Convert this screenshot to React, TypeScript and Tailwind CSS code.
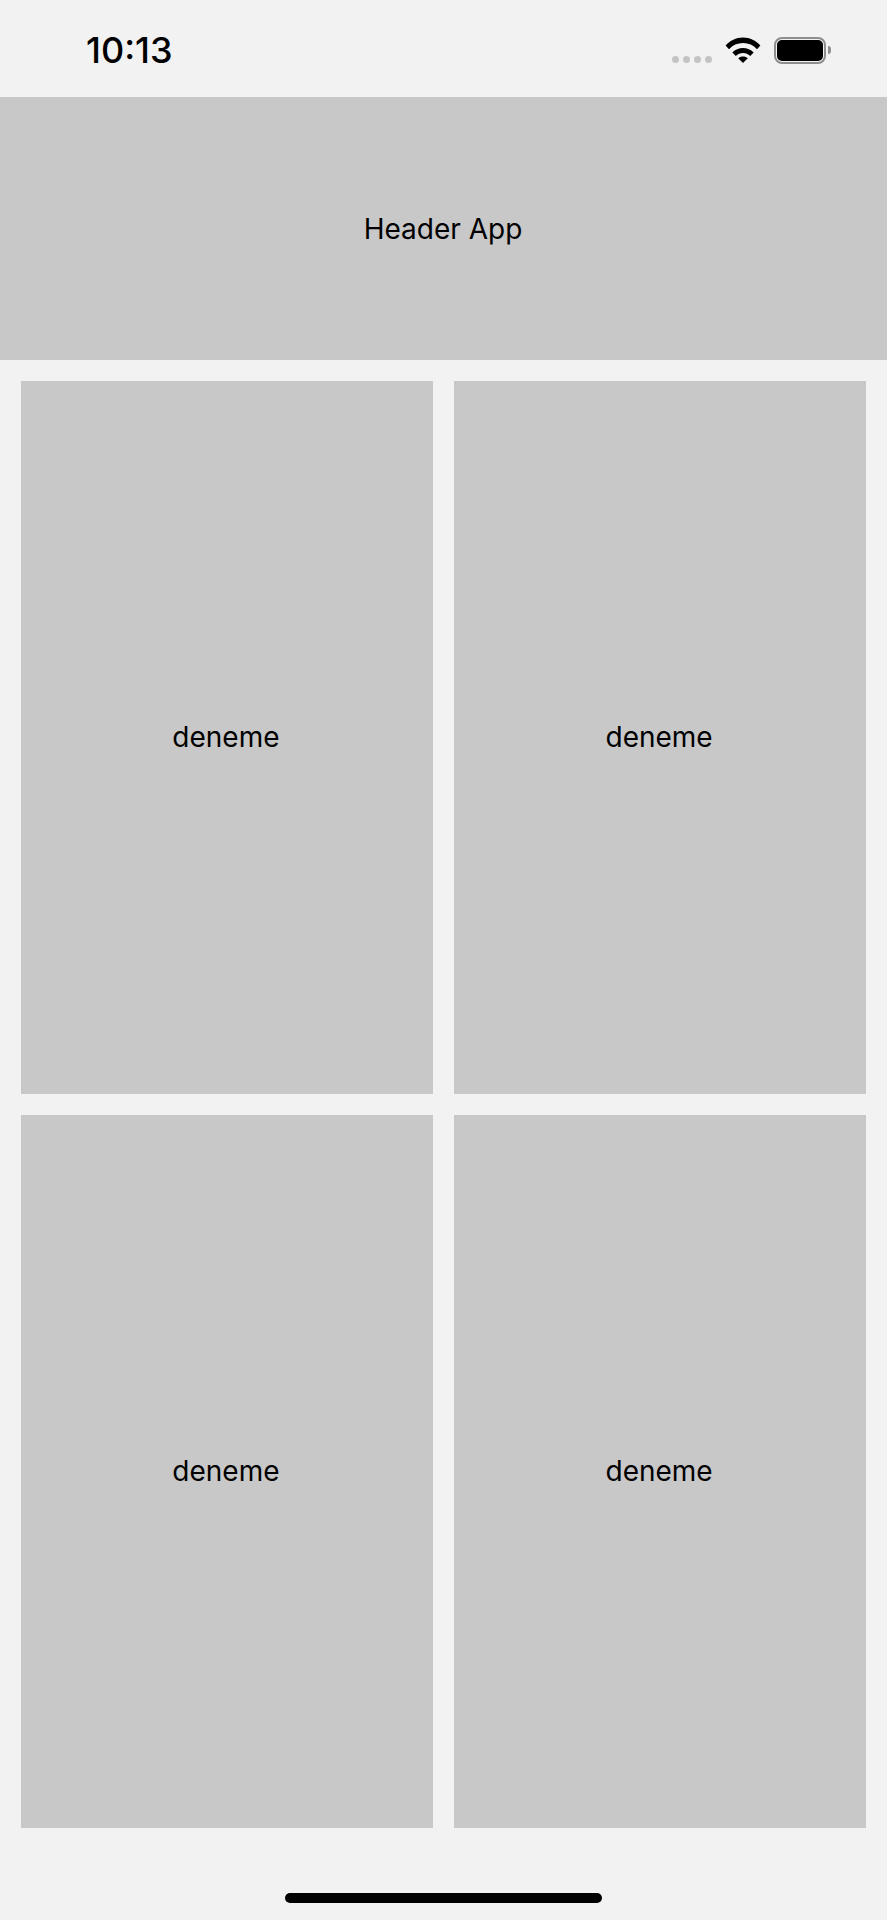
const cards = ["deneme", "deneme", "deneme", "deneme"];

function StatusIcons() {
  return (
    <div className="flex items-center">
      <div className="mt-[19px] mr-[13px] flex gap-[4px]">
        {[0, 1, 2, 3].map((i) => (
          <span key={i} className="h-[7px] w-[7px] rounded-full bg-[#c4c4c4]" />
        ))}
      </div>
      <svg width="36" height="26" viewBox="0 0 36 26" className="mr-[13px]">
        <path d="M0.6 8.6 C5 3.8 11 0.6 18 0.6 C25 0.6 31 3.8 35.4 8.6 L32 12.2 C28.4 8.2 23.6 6 18 6 C12.4 6 7.6 8.2 4 12.2 Z" fill="#000" />
        <path d="M7.3 15.4 C10.2 12.4 13.8 10.9 18 10.9 C22.2 10.9 25.8 12.4 28.7 15.4 L25.2 19 C23.2 17 20.8 15.9 18 15.9 C15.2 15.9 12.8 17 10.8 19 Z" fill="#000" />
        <path d="M13.2 21.2 C14.5 20.2 16.2 19.6 18 19.6 C19.8 19.6 21.5 20.2 22.8 21.2 L18 26 Z" fill="#000" />
      </svg>
      <div className="flex items-center">
        <div className="flex h-[27px] w-[52px] items-center justify-center rounded-[8px] border-[2px] border-[#8e8e8e] p-[1px]">
          <div className="h-full w-full rounded-[5px] bg-black" />
        </div>
        <div className="ml-[2px] h-[8px] w-[3px] rounded-r-full bg-[#8e8e8e]" />
      </div>
    </div>
  );
}

export default function App() {
  return (
    <div className="flex h-[1920px] w-[887px] flex-col bg-[#f2f2f2] font-['Inter',sans-serif] text-black">
      <div className="flex h-[97px] shrink-0 items-center justify-between pl-[86px] pr-[56px] pt-[3px]">
        <span className="text-[36px] font-[550] leading-none">10:13</span>
        <StatusIcons />
      </div>
      <div className="flex h-[263px] shrink-0 items-center justify-center bg-[#c8c8c8] pr-[1px] text-[28px] leading-none">
        Header App
      </div>
      <div className="grid grid-cols-2 gap-x-[20.6px] gap-y-[20.5px] px-[20.6px] pt-[21px]">
        {cards.map((label, i) => (
          <div key={i} className="flex h-[713.4px] items-center justify-center bg-[#c8c8c8] pr-[2px] pb-[1px] text-[28px] leading-none">
            {label}
          </div>
        ))}
      </div>
      <div className="mt-auto mb-[17px] h-[10px] w-[317px] self-center rounded-full bg-black" />
    </div>
  );
}
